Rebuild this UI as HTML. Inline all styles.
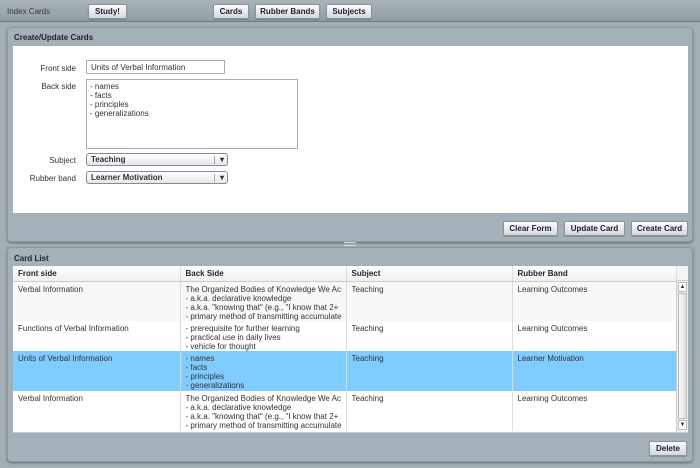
<!DOCTYPE html>
<html><head><style>
*{box-sizing:border-box;margin:0;padding:0}
body{width:700px;height:468px;background:#a3aeb5;font-family:"Liberation Sans",sans-serif;font-size:8px;color:#333;position:relative;overflow:hidden}
.abs{position:absolute}
.top{left:0;top:0;width:700px;height:22px;background:linear-gradient(#a9b4ba,#939ea5);border-bottom:1px solid #6f7a80}
.btn{position:absolute;height:15px;border:1px solid #8a959b;border-radius:2px;background:linear-gradient(#fbfbfb,#d5d9dc);font-weight:bold;color:#223;text-align:center;line-height:13px;font-size:8px;box-shadow:0 1px 1px rgba(0,0,0,.2)}
.panel{position:absolute;left:7px;width:686px;background:#a5b1b8;border-radius:4px;box-shadow:0 1px 2px rgba(0,0,0,.4);border:1px solid #8f9aa0}
.ph{position:absolute;left:6px;font-weight:bold;color:#223}
.white{position:absolute;background:#fff}
.lbl{position:absolute;text-align:right;width:63px;color:#333}
.inp{position:absolute;background:#fff;border:1px solid #aab;}
.sel{position:absolute;height:13px;border:1px solid #889;border-radius:3px;background:linear-gradient(#fff,#e4e6e8);font-weight:bold;padding-left:4px;line-height:11px}
.sel:after{content:"▾";position:absolute;right:3px;top:0;font-size:8px}
.sel i{position:absolute;right:12px;top:2px;height:8px;border-left:1px solid #aaa}
table{border-collapse:collapse;table-layout:fixed}
td,th{vertical-align:top;text-align:left;padding:0 5px;border-left:1px solid #ddd;line-height:9px;white-space:nowrap;overflow:hidden}
td div{overflow:hidden;padding-top:3px}
th{height:15px;font-weight:bold;color:#223;background:linear-gradient(#fff,#f0f0f0);border-bottom:1px solid #ccc;padding-top:3px}
</style></head><body>
<div class="abs top">
<div class="abs" style="left:7px;top:7px;color:#334">Index Cards</div>
<div class="btn" style="left:88px;top:4px;width:39px">Study!</div>
<div class="btn" style="left:213px;top:4px;width:36px">Cards</div>
<div class="btn" style="left:255px;top:4px;width:65px">Rubber Bands</div>
<div class="btn" style="left:326px;top:4px;width:46px">Subjects</div>
</div>
<div class="panel" style="top:27px;height:215px">
<div class="ph" style="top:5px">Create/Update Cards</div>
<div class="white" style="left:5px;top:18px;width:675px;height:167px">
<div class="lbl" style="left:0;top:18px">Front side</div>
<div class="inp" style="left:73px;top:14px;width:139px;height:14px;padding:2px 4px">Units of Verbal Information</div>
<div class="lbl" style="left:0;top:36px">Back side</div>
<div class="inp" style="left:73px;top:33px;width:212px;height:70px;padding:2px 3px;line-height:9px">- names<br>- facts<br>- principles<br>- generalizations</div>
<div class="lbl" style="left:0;top:110px">Subject</div>
<div class="sel" style="left:73px;top:107px;width:142px">Teaching<i></i></div>
<div class="lbl" style="left:0;top:128px">Rubber band</div>
<div class="sel" style="left:73px;top:125px;width:142px">Learner Motivation<i></i></div>
</div>
<div class="btn" style="left:495px;top:193px;width:55px">Clear Form</div>
<div class="btn" style="left:556px;top:193px;width:61px">Update Card</div>
<div class="btn" style="left:623px;top:193px;width:57px">Create Card</div>
</div>
<div class="abs" style="left:344px;top:242px;width:12px;height:4px;border-top:1px solid #ddd;border-bottom:1px solid #ddd"></div>
<div class="panel" style="top:247px;height:215px">
<div class="ph" style="top:6px">Card List</div>
<div class="white" style="left:5px;top:18px;width:675px;height:167px;overflow:hidden;border-bottom:1px solid #ccc">
<table style="width:663px">
<colgroup><col style="width:167px"><col style="width:166px"><col style="width:166px"><col style="width:164px"></colgroup>
<tr><th style="border-left:none">Front side</th><th>Back Side</th><th>Subject</th><th>Rubber Band</th></tr>
<tr style="background:#f8f8f8"><td style="border-left:none"><div style="height:39px">Verbal Information</div></td><td><div style="height:39px">The Organized Bodies of Knowledge We Acquire<br>- a.k.a. declarative knowledge<br>- a.k.a. "knowing that" (e.g., "I know that 2+<br>- primary method of transmitting accumulated</div></td><td><div style="height:39px">Teaching</div></td><td><div style="height:39px">Learning Outcomes</div></td></tr>
<tr><td style="border-left:none"><div style="height:30px">Functions of Verbal Information</div></td><td><div style="height:30px">- prerequisite for further learning<br>- practical use in daily lives<br>- vehicle for thought</div></td><td><div style="height:30px">Teaching</div></td><td><div style="height:30px">Learning Outcomes</div></td></tr>
<tr style="background:#80ccff"><td style="border-left:none"><div style="height:40px">Units of Verbal Information</div></td><td><div style="height:40px">- names<br>- facts<br>- principles<br>- generalizations</div></td><td><div style="height:40px">Teaching</div></td><td><div style="height:40px">Learner Motivation</div></td></tr>
<tr><td style="border-left:none"><div style="height:40px">Verbal Information</div></td><td><div style="height:40px">The Organized Bodies of Knowledge We Acquire<br>- a.k.a. declarative knowledge<br>- a.k.a. "knowing that" (e.g., "I know that 2+<br>- primary method of transmitting accumulated</div></td><td><div style="height:40px">Teaching</div></td><td><div style="height:40px">Learning Outcomes</div></td></tr>
</table>
<div class="abs" style="left:663px;top:0;width:12px;height:15px;background:#f4f4f4;border-left:1px solid #ddd;border-bottom:1px solid #ccc"></div>
<div class="abs" style="left:663px;top:15px;width:12px;height:152px;background:#eee;border-left:1px solid #ccc">
<div class="abs" style="left:1px;top:1px;width:9px;height:10px;background:#fff;border:1px solid #bbb;font-size:6px;text-align:center;line-height:8px">▲</div>
<div class="abs" style="left:1px;top:12px;width:9px;height:126px;background:linear-gradient(90deg,#f8f8f8,#ddd);border:1px solid #bbb"></div>
<div class="abs" style="left:1px;top:139px;width:9px;height:10px;background:#fff;border:1px solid #bbb;font-size:6px;text-align:center;line-height:8px">▼</div>
</div>
</div>
<div class="btn" style="left:641px;top:193px;width:38px">Delete</div>
</div>
</body></html>
